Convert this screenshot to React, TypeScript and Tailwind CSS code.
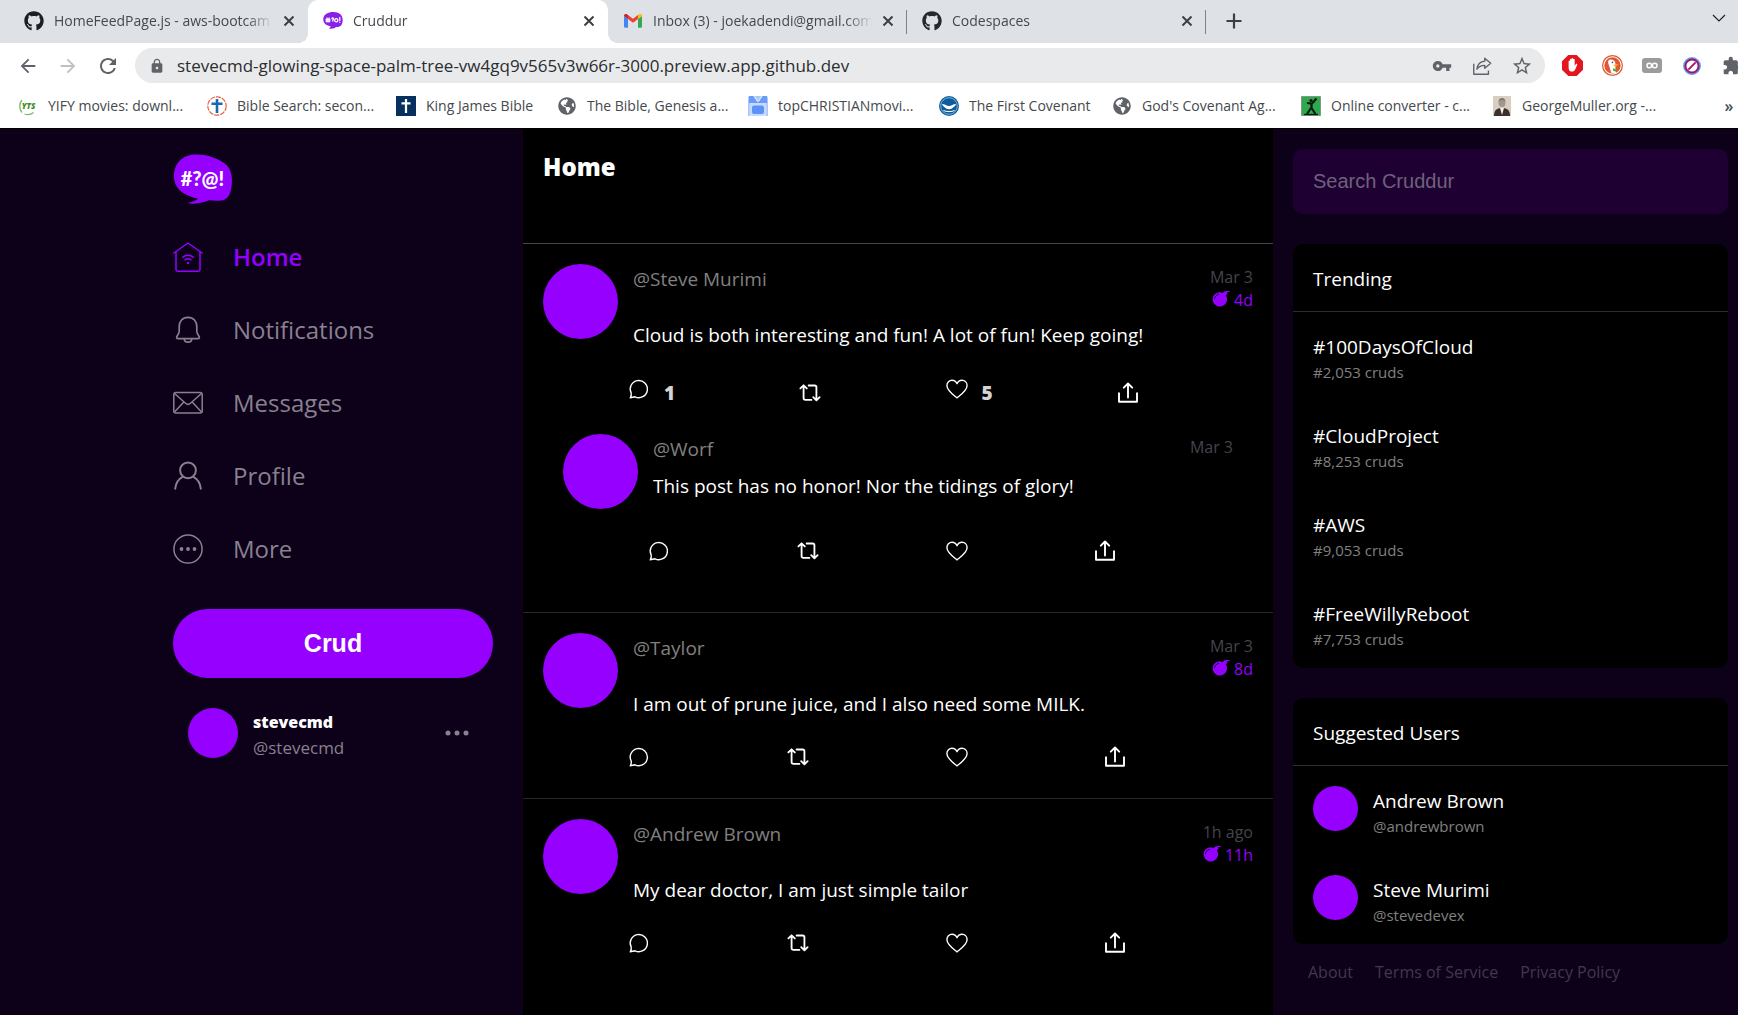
import type { ReactNode } from "react";
import { FaGithub, FaGlobeAmericas } from "react-icons/fa";
import {
  MdArrowBack,
  MdArrowForward,
  MdExtension,
  MdLock,
  MdRefresh,
  MdStarBorder,
  MdVpnKey,
} from "react-icons/md";

/* ---------- Logos and icons ---------- */

function CruddurLogo({ className }: { className: string }) {
  return (
    <svg viewBox="0 0 60 50" className={className} role="img" aria-label="Cruddur">
      <path
        d="M20 .6C32-.6 47 4.500 54 11.500c5 5 6 14 4 24-1.300 6.500-4.500 10.500-10 11-4.500.4-8 .2-12-.2-5 2.400-14 4.300-21.500 2.800 4-.8 8-2.300 10.500-4.300C12 42 3.500 36 1.300 26.500-.8 15 5 2.400 20 .6Z"
        fill="#9500ff"
      />
      <text
        x="29.500"
        y="32"
        textAnchor="middle"
        fill="#fff"
        fontFamily="Lato, sans-serif"
        fontWeight="900"
        fontSize="20"
      >
        #?@!
      </text>
    </svg>
  );
}

function CruddurFavicon() {
  return (
    <svg viewBox="0 0 20 20" className="size-5 shrink-0" aria-hidden="true">
      <path
        d="M6.500 1.500c5-1.300 10.500 0 12.300 3.500 1.500 3.500 1 8-1.300 10-1.500 1-3 1-4.500 1-1.500 1.500-4 2-7 1.500l2-2C3.500 14.500.5 12.500.3 9 .2 5 2.500 2.500 6.500 1.500Z"
        fill="#8a1fe8"
      />
      <g stroke="#fff" strokeWidth="1.300" fill="none" strokeLinecap="round">
        <path d="M4 7v4M6 7v4M3 8.300h4M3 10h4M8.800 7.300c1.500-.8 2.300.5 1 1.700V10M16.800 6.500v3M16.800 11.300v.1" />
        <circle cx="13.300" cy="9.200" r="1.600" />
      </g>
    </svg>
  );
}

function GmailIcon() {
  return (
    <svg viewBox="0 0 20 20" className="size-5 shrink-0" aria-hidden="true">
      <path d="M1 5v10.500c0 .8.600 1.200 1.200 1.200H5V8L1 5Z" fill="#4285f4" />
      <path d="M19 5v10.500c0 .8-.6 1.200-1.200 1.200H15V8l4-3Z" fill="#34a853" />
      <path d="M19 5c0-1.800-2-2.400-3.200-1.500L15 4.100V8l4-3Z" fill="#fbbc04" />
      <path d="M5 8V4.100l5 3.700 5-3.700V8l-5 3.800L5 8Z" fill="#ea4335" />
      <path d="M1 5c0-1.800 2-2.400 3.200-1.500L5 4.100V8L1 5Z" fill="#c5221f" />
    </svg>
  );
}

function CloseIcon() {
  return (
    <svg viewBox="0 0 16 16" className="size-4" fill="none" stroke="#3c4043" strokeWidth="2">
      <path d="m3.500 3.500 9 9m0-9-9 9" />
    </svg>
  );
}

function SharePageIcon() {
  return (
    <svg viewBox="0 0 24 24" className="size-[22px]" fill="none" stroke="#5f6368" strokeWidth="1.500" strokeLinejoin="round">
      <path d="M3 9.500V21h16v-4" />
      <path d="M15 3.500 21.500 9 15 14.500v-3.200c-4 0-6.500 1.200-8.500 4.200.5-5 3.500-8.300 8.500-8.800V3.500Z" />
    </svg>
  );
}

function HomeIcon() {
  return (
    <svg viewBox="0 0 30 30" className="size-[30px]" fill="none" stroke="currentColor" strokeWidth="1.500" strokeLinecap="round" strokeLinejoin="round">
      <path d="M.9 11 15 1l14.100 10M3 10v17.500C3 28.700 3.600 29.200 4.500 29.200h21c1 0 1.500-.5 1.500-1.700V10" />
      <path d="M9.800 15.200c3-2.500 7.400-2.500 10.400 0M12 17.900c1.800-1.400 4.200-1.400 6 0" />
      <circle cx="15" cy="21" r="1.200" fill="currentColor" stroke="none" />
    </svg>
  );
}

function BellIcon() {
  return (
    <svg viewBox="0 0 30 30" className="size-[30px]" fill="none" stroke="currentColor" strokeWidth="1.700" strokeLinecap="round" strokeLinejoin="round">
      <path d="M15 2.300c-5.500 0-8.800 4-8.800 9.200v4.800c0 2.200-1.500 3.600-2.300 5.200-.6 1.200-.1 2.200 1.100 2.200h20c1.200 0 1.700-1 1.100-2.200-.8-1.600-2.300-3-2.300-5.200v-4.800c0-5.200-3.300-9.200-8.800-9.200Z" />
      <path d="M11.300 24c0 2 1.500 3.200 3.700 3.200s3.700-1.200 3.700-3.200" />
    </svg>
  );
}

function MailIcon() {
  return (
    <svg viewBox="0 0 30 30" className="size-[30px]" fill="none" stroke="currentColor" strokeWidth="1.500" strokeLinejoin="round">
      <rect x=".8" y="4.500" width="28.400" height="20.500" rx="2" />
      <path d="m1.500 5.500 11 9.800c1.500 1.300 3.500 1.300 5 0l11-9.800M1.500 24l9.300-10M28.500 24l-9.300-10" />
    </svg>
  );
}

function ProfileIcon() {
  return (
    <svg viewBox="0 0 30 30" className="size-[30px]" fill="none" stroke="currentColor" strokeWidth="2" strokeLinecap="round">
      <circle cx="15" cy="9.300" r="7.900" />
      <path d="M2.200 27.700c.5-5.500 3.700-9.800 7.800-12M27.800 27.700c-.5-5.500-3.700-9.800-7.800-12" />
    </svg>
  );
}

function MoreIcon() {
  return (
    <svg viewBox="0 0 30 30" className="size-[30px]" fill="none" stroke="currentColor" strokeWidth="1.500">
      <circle cx="15" cy="15" r="14.100" />
      <g fill="currentColor" stroke="none">
        <circle cx="8.500" cy="15" r="1.900" />
        <circle cx="15" cy="15" r="1.900" />
        <circle cx="21.500" cy="15" r="1.900" />
      </g>
    </svg>
  );
}

function CommentIcon() {
  return (
    <svg viewBox="0 0 22 22" className="size-[22px]" fill="none" stroke="#fff" strokeWidth="1.400" strokeLinejoin="round">
      <path d="M2.300 19.800c.9-1.600 1.200-3 .9-4.700A8.600 8.600 0 1 1 7 18.800c-1.500.3-3.200.7-4.700 1Z" />
    </svg>
  );
}

function RepostIcon() {
  return (
    <svg viewBox="0 0 24 20" className="h-5 w-6" fill="none" stroke="#fff" strokeWidth="2" strokeLinecap="round" strokeLinejoin="round">
      <path d="M1.500 5 5 1.600 8.500 5M5 2v13.500c0 1.400.7 2 2 2h6.500" />
      <path d="M10.500 1.800H17c1.400 0 2 .7 2 2V17.500M15.500 14.500 19 18l3.500-3.500" />
    </svg>
  );
}

function HeartIcon() {
  return (
    <svg viewBox="0 0 24 22" className="h-[22px] w-6" fill="none" stroke="#fff" strokeWidth="1.500" strokeLinejoin="round">
      <path d="M12 20.700C7 16.700 1 12.800 1 7.300 1 3.700 3.600 1.500 6.500 1.500c2.600 0 4.500 1.400 5.500 3.700 1-2.300 2.900-3.700 5.500-3.700 2.900 0 5.500 2.200 5.500 5.800 0 5.500-6 9.400-11 13.400Z" />
    </svg>
  );
}

function ShareIcon() {
  return (
    <svg viewBox="0 0 22 22" className="size-[22px]" fill="none" stroke="#fff" strokeWidth="1.900" strokeLinecap="round" strokeLinejoin="round">
      <path d="M2 10.500v9.300h18v-9.300" strokeLinecap="butt" />
      <path d="M11 15.500V2M6.800 5.700 11 1.500l4.200 4.200" />
    </svg>
  );
}

function BombIcon() {
  return (
    <svg viewBox="0 0 18 17" className="h-[17px] w-[18px]" aria-hidden="true">
      <path
        d="M7 2.200c1.400 0 2.600.3 3.600.9L12 1.700c.4-.5 1-.6 1.500-.3L14 .9h3.300c.7 0 .7 1 0 1.100l-2.500.3.300.4c.4.500.3 1.100-.1 1.500l-1.200 1.100A7.200 7.200 0 1 1 7 2.200Z"
        fill="#9500ff"
      />
      <path d="M2.500 8.700C2.800 6.500 4.500 4.700 6.700 4.300" fill="none" stroke="#000" strokeWidth=".8" strokeLinecap="round" />
    </svg>
  );
}

/* ---------- Browser frame ---------- */

type TabData = { title: string; icon: ReactNode; active?: boolean; divider?: boolean };

const tabs: TabData[] = [
  { title: "HomeFeedPage.js - aws-bootcam", icon: <FaGithub className="size-5 shrink-0 text-[#1b1f23]" /> },
  { title: "Cruddur", icon: <CruddurFavicon />, active: true },
  { title: "Inbox (3) - joekadendi@gmail.com", icon: <GmailIcon />, divider: true },
  { title: "Codespaces", icon: <FaGithub className="size-5 shrink-0 text-[#24292f]" />, divider: true },
];

function Tab({ tab }: { tab: TabData }) {
  return (
    <div
      className={
        tab.active
          ? "relative flex h-full w-[300px] items-center rounded-t-[10px] bg-white pr-[11px] pb-px pl-[15px]"
          : "relative flex h-full w-[299px] items-center pr-[11px] pb-px pl-[15px]"
      }
    >
      {tab.active && (
        <>
          <span className="absolute bottom-0 -left-2.5 size-2.5 bg-[radial-gradient(circle_at_0_0,transparent_10px,white_10px)]" />
          <span className="absolute -right-2.5 bottom-0 size-2.5 bg-[radial-gradient(circle_at_100%_0,transparent_10px,white_10px)]" />
        </>
      )}
      {tab.icon}
      <button
        type="button"
        className="mr-2 ml-2.5 min-w-0 flex-1 overflow-hidden mask-r-from-88% text-left text-sm whitespace-nowrap text-[#45494d]"
      >
        {tab.title}
      </button>
      <button type="button" aria-label={`Close ${tab.title}`}>
        <CloseIcon />
      </button>
      {tab.divider && <span className="absolute top-2.5 right-0 h-6 w-px bg-[#808488]" />}
    </div>
  );
}

function ToolButton({ label, children }: { label: string; children: ReactNode }) {
  return (
    <button type="button" aria-label={label} className="flex w-10 shrink-0 items-center justify-center">
      {children}
    </button>
  );
}

const globe = <FaGlobeAmericas className="size-[18px] text-[#5f6368]" />;

const bookmarks: { label: string; width: string; icon: ReactNode }[] = [
  {
    label: "YIFY movies: downl...",
    width: "w-[139px]",
    icon: (
      <svg viewBox="0 0 20 20" className="size-5">
        <path d="M4 4C1 7.500 1 13 4 16.500M6.500 18c3 1 6.500.5 9-1.500" fill="none" stroke="#7db86c" strokeWidth="1.300" />
        <text x="10.500" y="13" textAnchor="middle" fontFamily="Open Sans, sans-serif" fontStyle="italic" fontWeight="800" fontSize="8" fill="#3f8f2b">
          YTS
        </text>
      </svg>
    ),
  },
  {
    label: "Bible Search: secon...",
    width: "w-[139px]",
    icon: (
      <svg viewBox="0 0 20 20" className="size-5">
        <circle cx="10" cy="10" r="9.200" fill="#fff" stroke="#e2613c" strokeWidth="1.200" strokeDasharray="5 1" />
        <path d="M10 3v14M4.500 7.800h11" stroke="#1769b5" strokeWidth="2.600" />
      </svg>
    ),
  },
  {
    label: "King James Bible",
    width: "w-[111px]",
    icon: (
      <svg viewBox="0 0 20 20" className="size-5">
        <path d="M0 0h20v20H0z" fill="#07305f" />
        <path d="M10 3v14M5.500 7.300h9" stroke="#fff" strokeWidth="2.200" />
      </svg>
    ),
  },
  { label: "The Bible, Genesis a...", width: "w-[141px]", icon: globe },
  {
    label: "topCHRISTIANmovi...",
    width: "w-[141px]",
    icon: (
      <svg viewBox="0 0 20 20" className="size-5">
        <path d="M2 0h16a2 2 0 0 1 2 2v18h-2V9a2 2 0 0 0-2-2H4a2 2 0 0 0-2 2v11H0V2a2 2 0 0 1 2-2Z" fill="#a9c7fb" />
        <path d="M1 0h5l3 5h2l3-5h5v7H1z" fill="#6a9cf7" />
        <path d="m6 0 3.500 5h1L14 0" fill="none" stroke="#dce8fe" strokeWidth="1.300" />
        <rect x="1.500" y="7" width="17" height="13" rx="3" fill="#c7dafd" />
        <rect x="4" y="9.500" width="12" height="8.500" rx="2" fill="#5c93f7" />
      </svg>
    ),
  },
  {
    label: "The First Covenant",
    width: "w-[123px]",
    icon: (
      <svg viewBox="0 0 20 20" className="size-5">
        <circle cx="10" cy="10" r="10" fill="#0f5c9c" />
        <circle cx="10" cy="10" r="8.300" fill="none" stroke="#9cc4e4" strokeWidth=".8" />
        <path d="M3 8c3 0 4.500 2 7 2s4-2 7-2c-.5 2.500-3 3-4 4.500-1.500 1-4.500 1-6 0C6 11 3.500 10.500 3 8Z" fill="#fff" />
        <path d="M4.500 14.500c3 1.500 8 1.500 11 0" stroke="#fff" fill="none" />
      </svg>
    ),
  },
  { label: "God's Covenant Ag...", width: "w-[139px]", icon: globe },
  {
    label: "Online converter - c...",
    width: "w-[141px]",
    icon: (
      <svg viewBox="0 0 20 20" className="size-5">
        <path d="M.5.5h19v19H.5z" fill="#2fa84f" stroke="#7d9b84" />
        <path d="M15.500 2.500 11 7.500 6 7M10.500 7v6M10 12l-4 6M10.500 12l4 6" fill="none" stroke="#0b1a0e" strokeWidth="2.200" />
        <circle cx="10" cy="4.500" r="1.600" fill="#0b1a0e" />
        <path d="M3 18.500h14" stroke="#0b1a0e" strokeWidth="1.300" />
      </svg>
    ),
  },
  {
    label: "GeorgeMuller.org -...",
    width: "w-[141px]",
    icon: (
      <svg viewBox="0 0 20 20" className="size-5">
        <path d="M1 0h18v20H1z" fill="#d8cfc1" />
        <path d="M2 20c0-6 3-8 8-8s8 2 8 8Z" fill="#3b302b" />
        <path d="m8 12 2 7 2-7Z" fill="#f4efe8" />
        <ellipse cx="10" cy="6.500" rx="3.500" ry="4.500" fill="#a3968a" />
        <path d="M6.500 5.500C7 1 13 1 13.500 5.500 12 3.500 8 3.500 6.500 5.500Z" fill="#7d726b" />
      </svg>
    ),
  },
];

function BrowserFrame() {
  return (
    <header className="border-b border-black bg-white">
      <div className="flex h-[43px] items-stretch bg-[#dee1e6] pl-[9px]">
        {tabs.map((tab) => (
          <Tab key={tab.title} tab={tab} />
        ))}
        <button type="button" aria-label="New tab" className="ml-5 pb-px">
          <svg viewBox="0 0 16 16" className="size-4" stroke="#3c4043" strokeWidth="2.200">
            <path d="M8 .5v15M.5 8h15" />
          </svg>
        </button>
        <button type="button" aria-label="Search tabs" className="mr-3 ml-auto pb-[7px]">
          <svg viewBox="0 0 14 14" className="size-3.5" fill="none" stroke="#202124" strokeWidth="1.200">
            <path d="m1 4 6 6 6-6" />
          </svg>
        </button>
      </div>

      <div className="flex h-[45px] items-center overflow-hidden pl-2 text-[#5f6368]">
        <ToolButton label="Back">
          <MdArrowBack className="size-[22px]" />
        </ToolButton>
        <ToolButton label="Forward">
          <MdArrowForward className="size-[22px] text-[#bdc1c6]" />
        </ToolButton>
        <ToolButton label="Reload">
          <MdRefresh className="size-6" />
        </ToolButton>
        <div className="mx-[7px] flex h-[35px] min-w-0 flex-1 items-center rounded-full bg-[#e9eaec] pr-[3px] pl-3.5">
          <MdLock className="size-4 shrink-0" />
          <input
            aria-label="Address"
            className="ml-3 min-w-0 flex-1 bg-transparent text-[17px] text-[#2b2d30] outline-none"
            defaultValue="stevecmd-glowing-space-palm-tree-vw4gq9v565v3w66r-3000.preview.app.github.dev"
          />
          <ToolButton label="Saved passwords">
            <MdVpnKey className="size-5" />
          </ToolButton>
          <ToolButton label="Share this page">
            <SharePageIcon />
          </ToolButton>
          <ToolButton label="Bookmark this page">
            <MdStarBorder className="size-[22px]" />
          </ToolButton>
        </div>
        <div className="flex w-[186px] shrink-0">
          <ToolButton label="Ad blocker">
            <svg viewBox="0 0 20 20" className="size-[21px]">
              <path d="M6 0h8l6 6v8l-6 6H6l-6-6V6Z" fill="#e3151d" />
              <path d="M6.300 9V6c0-1 1.400-1 1.400 0V4.300c0-1 1.400-1 1.400 0v-.8c0-1 1.500-1 1.500 0v.8c0-1 1.500-1 1.500 0v6.200l1-1.700c.5-.8 1.700-.3 1.300.7-1 2.500-1.700 4-2.200 5-1 1.700-4.600 1.700-5.400 0-.5-1.200-.5-3-.5-5.500Z" fill="#fff" />
            </svg>
          </ToolButton>
          <ToolButton label="DuckDuckGo">
            <svg viewBox="0 0 20 20" className="size-[21px]">
              <circle cx="10" cy="10" r="10" fill="#de5833" />
              <circle cx="10" cy="10" r="8.300" fill="none" stroke="#fff" strokeWidth="1" />
              <path d="M6 5.500c1.500-2 5.500-1.500 6.500 1.500.5 2 .3 3 .2 5l.8 5c-1.500.8-3.300.8-4.500.5L7 11c-.6-2-1.500-3.500-1-5.500Z" fill="#fff" />
              <path d="M11 9.500c1.500-.7 3.500-.8 4.500-.3-1 1-2.500 1.500-4.500 1.300Z" fill="#fdb913" />
              <path d="M10.500 12.500l4 1.500-1 2-3-1Z" fill="#5aa545" />
              <circle cx="10" cy="7" r=".8" fill="#2d4f8e" />
            </svg>
          </ToolButton>
          <ToolButton label="Link extension">
            <svg viewBox="0 0 20 15" className="h-[15px] w-5">
              <rect width="20" height="15" rx="3" fill="#9b9b9b" />
              <g fill="none" stroke="#fff" strokeWidth="1.500">
                <circle cx="7.300" cy="7.500" r="2.300" />
                <circle cx="12.700" cy="7.500" r="2.300" />
              </g>
            </svg>
          </ToolButton>
          <ToolButton label="Blocker">
            <svg viewBox="0 0 20 20" className="size-[18px]" fill="none">
              <circle cx="10" cy="10" r="8.800" stroke="#5aa0e8" strokeWidth="2.200" />
              <circle cx="10" cy="10" r="7.300" stroke="#a01570" strokeWidth="2.200" />
              <path d="m6 14 8-8" stroke="#a01570" strokeWidth="2.200" />
            </svg>
          </ToolButton>
          <ToolButton label="Extensions">
            <MdExtension className="size-5" />
          </ToolButton>
        </div>
      </div>

      <nav aria-label="Bookmarks" className="flex h-10 items-center gap-5 pr-[3px] pb-1 pl-[18px]">
        {bookmarks.map((b) => (
          <a key={b.label} href="#" className="flex items-center gap-2.5 text-sm whitespace-nowrap text-[#45494d]">
            <span className="flex size-5 shrink-0 items-center justify-center">{b.icon}</span>
            <span className={b.width}>{b.label}</span>
          </a>
        ))}
        <button type="button" aria-label="More bookmarks" className="ml-auto w-3 text-base font-semibold text-[#45494d]">
          »
        </button>
      </nav>
    </header>
  );
}

/* ---------- Left navigation ---------- */

const navItems: { label: string; icon: ReactNode; active?: boolean }[] = [
  { label: "Home", icon: <HomeIcon />, active: true },
  { label: "Notifications", icon: <BellIcon /> },
  { label: "Messages", icon: <MailIcon /> },
  { label: "Profile", icon: <ProfileIcon /> },
  { label: "More", icon: <MoreIcon /> },
];

function Sidebar() {
  return (
    <section className="ml-auto w-[350px] pt-[25px] pr-[30px]">
      <CruddurLogo className="h-[50px] w-[60px]" />
      <nav aria-label="Main" className="mt-4">
        {navItems.map((item) => (
          <a
            key={item.label}
            href="#"
            className={
              item.active
                ? "flex h-[73px] items-center gap-[30px] text-2xl font-semibold text-[#9500ff]"
                : "flex h-[73px] items-center gap-[30px] text-2xl text-[#88818f]"
            }
          >
            {item.icon}
            {item.label}
          </a>
        ))}
      </nav>
      <button
        type="button"
        className="mt-6 h-[69px] w-full rounded-full bg-[#9500ff] font-['Liberation_Sans',Arial,sans-serif] text-[25px] font-bold text-white"
      >
        Crud
      </button>
      <div className="mt-[30px] flex h-[50px] items-center px-[15px]">
        <div className="size-[50px] rounded-full bg-[#9500ff]" />
        <div className="ml-[15px] pt-[3px]">
          <div className="text-base leading-[25px] font-extrabold text-white">stevecmd</div>
          <div className="text-[17px] leading-[25px] text-[#88818f]">@stevecmd</div>
        </div>
        <button type="button" aria-label="Account options" className="mr-2 ml-auto">
          <svg viewBox="0 0 26 6" className="h-1.5 w-[26px]" fill="#88818f">
            <circle cx="4" cy="3" r="2.500" />
            <circle cx="13" cy="3" r="2.500" />
            <circle cx="22" cy="3" r="2.500" />
          </svg>
        </button>
      </div>
    </section>
  );
}

/* ---------- Feed ---------- */

type Post = {
  handle: string;
  message: string;
  time: string;
  expires?: string;
  replies?: number;
  likes?: number;
  thread?: Post[];
};

const posts: Post[] = [
  {
    handle: "Steve Murimi",
    message: "Cloud is both interesting and fun! A lot of fun! Keep going!",
    time: "Mar 3",
    expires: "4d",
    replies: 1,
    likes: 5,
    thread: [{ handle: "Worf", message: "This post has no honor! Nor the tidings of glory!", time: "Mar 3" }],
  },
  { handle: "Taylor", message: "I am out of prune juice, and I also need some MILK.", time: "Mar 3", expires: "8d" },
  { handle: "Andrew Brown", message: "My dear doctor, I am just simple tailor", time: "1h ago", expires: "11h" },
];

function Action({ label, count, children }: { label: string; count?: number; children: ReactNode }) {
  return (
    <div className="flex flex-auto items-center">
      <button type="button" aria-label={label} className="flex items-center px-2.5">
        <span className={count ? "mb-2 flex w-[22px] justify-center" : "flex w-[22px] justify-center"}>{children}</span>
        {count && <span className="ml-3.5 text-[19px] leading-[22px] font-extrabold text-[#d4d4d4]">{count}</span>}
      </button>
    </div>
  );
}

function PostItem({ post, reply }: { post: Post; reply?: boolean }) {
  return (
    <div className="flex">
      <div className="size-[75px] shrink-0 rounded-full bg-[#9500ff]" />
      <div className="min-w-0 flex-1">
        <div className="flex justify-between pl-[15px]">
          <a href="#" className="pt-px text-[19px] leading-7 text-[#808080]">
            @{post.handle}
          </a>
          <div className={reply ? "-mb-1 pt-0.5 text-right leading-[23px]" : "pt-0.5 text-right leading-[23px]"}>
            <div className="text-[#44444e]">{post.time}</div>
            {post.expires && (
              <div className="flex items-center justify-end gap-1 text-[#9500ff]">
                <span className="pb-1">
                  <BombIcon />
                </span>
                <span>{post.expires}</span>
              </div>
            )}
          </div>
        </div>
        <p className="mt-[9px] pl-[15px] text-[19px] leading-7 text-white">{post.message}</p>
        <div
          className={
            reply
              ? "mt-[30px] flex h-[42px] items-center"
              : post.replies
                ? "mt-[18px] flex h-[52px] items-center"
                : "mt-[18px] flex h-[42px] items-center"
          }
        >
          <Action label="Reply" count={post.replies}>
            <CommentIcon />
          </Action>
          <Action label="Repost">
            <RepostIcon />
          </Action>
          <Action label="Like" count={post.likes}>
            <HeartIcon />
          </Action>
          <Action label="Share">
            <ShareIcon />
          </Action>
        </div>
      </div>
    </div>
  );
}

function Feed() {
  return (
    <main className="bg-black">
      <div className="h-[115px] border-b border-[#45454d] p-5">
        <h1 className="text-2xl leading-9 font-extrabold text-white">Home</h1>
      </div>
      {posts.map((post, i) => (
        <article
          key={post.handle}
          className={i < posts.length - 1 ? "border-b border-[#27272b] p-5" : "p-5"}
        >
          <PostItem post={post} />
          {post.thread?.map((r) => (
            <div key={r.handle} className="mt-[15px] px-5 pb-5">
              <PostItem post={r} reply />
            </div>
          ))}
        </article>
      ))}
    </main>
  );
}

/* ---------- Right column ---------- */

const trending = [
  { tag: "#100DaysOfCloud", count: "2,053" },
  { tag: "#CloudProject", count: "8,253" },
  { tag: "#AWS", count: "9,053" },
  { tag: "#FreeWillyReboot", count: "7,753" },
];

const suggested = [
  { name: "Andrew Brown", handle: "andrewbrown" },
  { name: "Steve Murimi", handle: "stevedevex" },
];

function Card({ title, children }: { title: string; children: ReactNode }) {
  return (
    <section className="mt-[30px] rounded-[10px] bg-black text-white">
      <h2 className="border-b border-[#2d2d31] px-5 pt-[22px] pb-[18px] text-[19px] leading-[27px]">{title}</h2>
      {children}
    </section>
  );
}

function RightColumn() {
  return (
    <aside className="pt-5 pr-2.5 pl-5">
      <form role="search">
        <input
          type="text"
          aria-label="Search Cruddur"
          placeholder="Search Cruddur"
          className="h-[65px] w-full rounded-[10px] bg-[#1e0033] px-5 font-['Liberation_Sans',Arial,sans-serif] text-xl text-white outline-none placeholder:text-[#6f617b]"
        />
      </form>
      <Card title="Trending">
        {trending.map((t) => (
          <a key={t.tag} href="#" className="block h-[89px] px-5 pt-[21px]">
            <div className="text-[19px] leading-7">{t.tag}</div>
            <div className="text-[15px] leading-[22px] text-[#808080]">#{t.count} cruds</div>
          </a>
        ))}
      </Card>
      <Card title="Suggested Users">
        {suggested.map((u) => (
          <a key={u.handle} href="#" className="flex h-[89px] gap-[15px] px-5 pt-5">
            <div className="size-[45px] rounded-full bg-[#9500ff]" />
            <div className="pt-px">
              <div className="text-[19px] leading-7">{u.name}</div>
              <div className="text-[15px] leading-[22px] text-[#808080]">@{u.handle}</div>
            </div>
          </a>
        ))}
      </Card>
      <footer className="mt-4 flex gap-[22px] px-[15px] text-base text-[#41384c]">
        <a href="#">About</a>
        <a href="#">Terms of Service</a>
        <a href="#">Privacy Policy</a>
      </footer>
    </aside>
  );
}

export default function App() {
  return (
    <div className="flex min-h-screen flex-col bg-[#0d0019] font-['Open_Sans','Noto_Sans',sans-serif]">
      <BrowserFrame />
      <div className="grid flex-1 grid-cols-[minmax(0,1fr)_750px_465px]">
        <Sidebar />
        <Feed />
        <RightColumn />
      </div>
    </div>
  );
}
